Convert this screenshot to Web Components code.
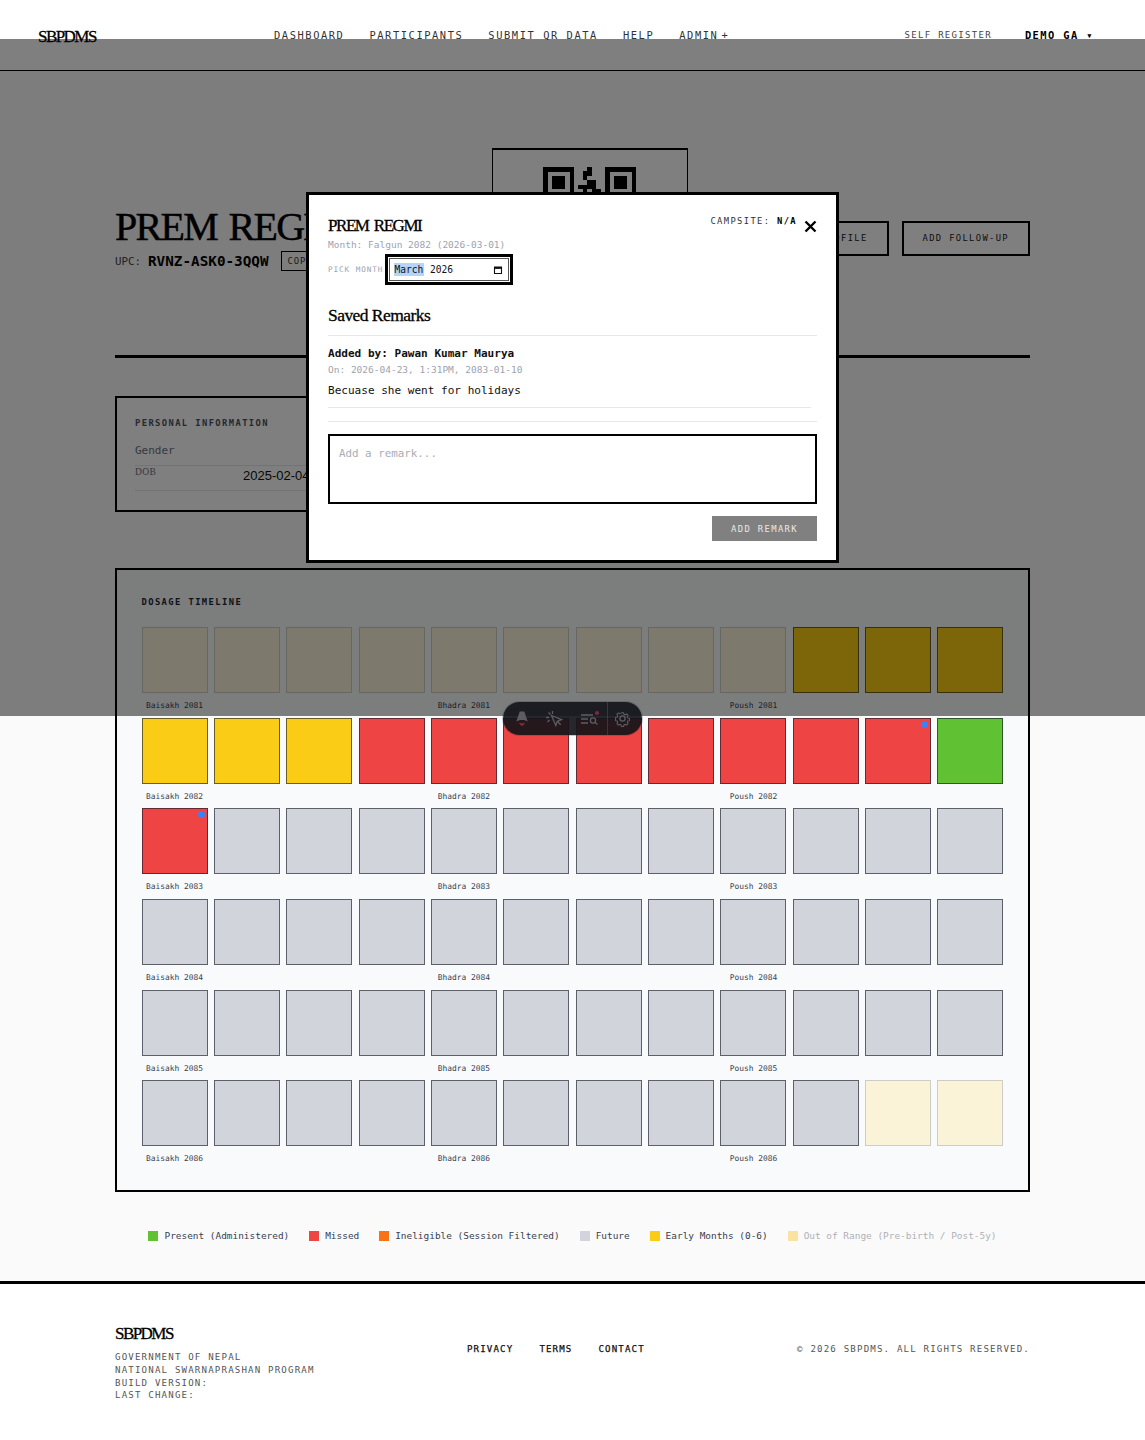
<!DOCTYPE html>
<html lang="en"><head><meta charset="utf-8"><title>SBPDMS</title>
<style>
html,body{margin:0;padding:0}
body{background:#fafafa;font-family:"DejaVu Sans Mono","Liberation Mono",monospace;color:#000;position:relative;min-height:1440px;overflow-x:hidden}
</style></head><body>
<app-header></app-header>
<app-main></app-main>
<app-footer></app-footer>
<remark-modal></remark-modal>
<dev-toolbar></dev-toolbar>
<script>
const MONO='"DejaVu Sans Mono","Liberation Mono",monospace';
const SERIF='"Liberation Serif",serif';
function def(name,html,after){
  customElements.define(name,class extends HTMLElement{
    constructor(){super();this.attachShadow({mode:'open'}).innerHTML=typeof html==='function'?html(this):html;}
    connectedCallback(){if(after)after(this.shadowRoot,this);}
  });
}
def('app-logo',`<style>:host{display:inline-block;font:400 17px/1.2 ${SERIF};letter-spacing:-1.55px;-webkit-text-stroke:.3px #000;color:#000}</style>SBPDMS`);
def('app-header',`<style>
:host{display:block;height:70px;background:#fff;border-bottom:1px solid #000;box-sizing:content-box}
.b{display:flex;align-items:center;height:22px;padding:25px 51px 0 38px;position:relative}
app-logo{margin-top:2px}
nav{position:absolute;left:274px;top:24px;height:22px;display:flex;gap:25px;align-items:center;font:400 10.4px/1 ${MONO};letter-spacing:1.57px;color:#333}
nav em{font-style:normal;margin-left:3px}
.r{margin-left:auto;display:flex;gap:33px;align-items:center;margin-top:-2px}
.s{font-size:9px;letter-spacing:1.3px;color:#444}
.d{font-size:10.4px;font-weight:700;letter-spacing:1.42px}
</style><div class="b"><app-logo></app-logo>
<nav><span>DASHBOARD</span><span>PARTICIPANTS</span><span>SUBMIT QR DATA</span><span>HELP</span><span>ADMIN<em>+</em></span></nav>
<div class="r"><span class="s">SELF REGISTER</span><span class="d">DEMO GA ▾</span></div></div>`);
const QR=["1111111000100011111111","1000001001100010000010","1011101001000010111010","1011101000110010111010","1011101011110010111010","1000001001011010000010","1111111010101011111110","0000000011010000000000","1011011101101101101110","0101100110010011010010","1110111001101100110110","0011000111010110001010","1101101010111001101100","0000000011001010110010","1111111001110110101110","1000001010011001010100","1011101011100111011010","1011101001011000101100","1011101010110111010110","1000001011001010011010","1111111001110101101100"];
def('qr-code',()=>{let r='';QR.forEach((row,y)=>[...row.slice(0,21)].forEach((c,x)=>{if(c==='1')r+=`<rect x="${x}" y="${y}" width="1.02" height="1.02"/>`}));
return `<style>:host{display:block;width:93px;height:93px}svg{display:block}</style><svg width="93" height="93" viewBox="0 0 21 21" shape-rendering="crispEdges" fill="#000">${r}</svg>`});
def('app-hero',`<style>
:host{display:flex;justify-content:space-between;align-items:center;padding:0 0 23px;border-bottom:3px solid #000;height:184px}
.l{width:298px;margin-top:-4px}
h1{margin:0;font:400 40px/1.1 ${SERIF};letter-spacing:-1.7px;word-spacing:3px;-webkit-text-stroke:.45px #000;color:#000;white-space:nowrap}
.u{display:flex;align-items:center;margin-top:2px;font-size:10.8px;color:#444;white-space:nowrap}
.u b{font-size:14.3px;color:#000;margin:0 12px 0 7px}
.c{border:1px solid #000;font-size:8.8px;letter-spacing:1px;padding:4px 6px;color:#333}
.q{box-sizing:border-box;width:196px;height:184px;border:solid #000;border-width:2px 1px 1px;padding-top:17px;display:flex;justify-content:center;background:#fff}
.a{display:flex;gap:13px;margin-top:-4px}
.btn{border:2px solid #000;height:35px;box-sizing:border-box;display:flex;align-items:center;justify-content:center;font-size:8.8px;letter-spacing:1.35px;padding:0 19px;background:#fff;color:#222}
</style><div class="l"><h1>PREM REGMI</h1><div class="u">UPC: <b>RVNZ-ASK0-3QQW</b><span class="c">COPY</span></div></div>
<div class="q"><qr-code></qr-code></div>
<div class="a"><span class="btn">EDIT PROFILE</span><span class="btn">ADD FOLLOW-UP</span></div>`);
def('info-card',`<style>
:host{display:block;box-sizing:border-box;width:450px;height:116px;border:2px solid #000;padding:18px 18px;background:#fff}
h2{margin:0 0 13px;font:700 8.8px/14px ${MONO};letter-spacing:1.4px;color:#4b5563}
.g{font-size:11px;line-height:16px;color:#6b7280;padding-bottom:6px;border-bottom:1px solid #e5e7eb;display:flex;justify-content:space-between}
.d{display:grid;grid-template-columns:108px 1fr;height:25px;border-bottom:1px solid #e5e7eb;box-sizing:border-box}
.d span:first-child{font:400 9.5px/13px ${SERIF};letter-spacing:.4px;color:#6b7280}
.d span:last-child{font:13px/20px "Liberation Sans",sans-serif;color:#111;margin-top:0}
</style><h2>PERSONAL INFORMATION</h2><div class="g"><span>Gender</span><span>Female</span></div><div class="d"><span>DOB</span><span>2025-02-04</span></div>`);
const R=[];const mk=(a)=>R.push(a);
mk([...Array(9).fill('o'),'e','e','e']);
mk(['e','e','e',...Array(7).fill('m'),'m*','p']);
mk(['m*',...Array(11).fill('f')]);
mk(Array(12).fill('f'));mk(Array(12).fill('f'));
mk([...Array(10).fill('f'),'o','o']);
const YRS=[2081,2082,2083,2084,2085,2086];
def('dose-cell',`<style>
:host{display:block;box-sizing:border-box;aspect-ratio:1;border:1px solid rgba(17,24,39,.62);position:relative;background:var(--bg)}
:host([s=o]){opacity:.3}
i{display:none;position:absolute;top:2px;right:2px;width:7px;height:7px;border-radius:50%;background:#3b82f6}
:host([dot]) i{display:block}
</style><i></i>`);
def('dosage-timeline',()=>{
 const col={o:'#fde68a',e:'#facc15',m:'#ef4444',p:'#60c232',f:'#d1d5db'};
 let h='';R.forEach((row,i)=>{row.forEach((c,j)=>{
   const s=c[0],dot=c[1]==='*';
   const lab=j===0?'Baisakh':j===4?'Bhadra':j===8?'Poush':'';
   h+=`<div class="c"><dose-cell s="${s}" ${dot?'dot':''} style="--bg:${col[s]}"></dose-cell><span>${lab?lab+' '+YRS[i]:''}</span></div>`;
 })});
 return `<style>
:host{display:block;border:2px solid #000;background:#f9fafb;padding:25px 24.5px 21px;box-sizing:border-box;height:624px}
h2{margin:0 0 18px;font:700 8.8px/14px ${MONO};letter-spacing:1.41px;color:#1f2937}
.g{display:grid;grid-template-columns:repeat(12,1fr);column-gap:6.3px}
.c{height:90.65px;text-align:center;white-space:nowrap}
.c span{display:block;font-size:7.9px;line-height:10px;color:#374151;margin-top:8px}
</style><h2>DOSAGE TIMELINE</h2><div class="g">${h}</div>`;
});
def('dose-legend',`<style>
:host{display:flex;justify-content:center;gap:19.95px;font-size:9.44px;line-height:12px;color:#374151;white-space:nowrap}
span{display:flex;align-items:center;gap:6px}
i{width:10px;height:10px;display:block;background:var(--c)}
.o{opacity:.4}
</style><span><i style="--c:#60c232"></i>Present (Administered)</span><span><i style="--c:#ef4444"></i>Missed</span><span><i style="--c:#f97316"></i>Ineligible (Session Filtered)</span><span><i style="--c:#d1d5db"></i>Future</span><span><i style="--c:#facc15"></i>Early Months (0-6)</span><span class="o"><i style="--c:#fbbf24"></i>Out of Range (Pre-birth / Post-5y)</span>`);
def('app-main',`<style>
:host{display:block;padding:77px 115px 0;height:1210px;box-sizing:border-box}
info-card{margin-top:38px}
dosage-timeline{margin-top:56px}
dose-legend{margin-top:38px}
</style><app-hero></app-hero><info-card></info-card><dosage-timeline></dosage-timeline><dose-legend></dose-legend>`);
def('app-footer',`<style>
:host{display:block;background:#fff;border-top:3px solid #000;height:159px;box-sizing:border-box;padding:40px 115px 0}
.w{display:grid;grid-template-columns:352px 1fr auto}
.t{font-size:9.1px;letter-spacing:1.18px;line-height:12.6px;color:#555;margin-top:7px}
.n{display:flex;gap:26px;font-size:9.1px;letter-spacing:1.15px;margin-top:19px;line-height:12px}
.n span{font-weight:400;color:#111;-webkit-text-stroke:.25px #111}
.c{font-size:9.1px;letter-spacing:1.18px;color:#555;margin-top:19px;line-height:12px}
</style><div class="w"><div><app-logo></app-logo><div class="t">GOVERNMENT OF NEPAL<br>NATIONAL SWARNAPRASHAN PROGRAM<br>BUILD VERSION:<br>LAST CHANGE:</div></div>
<div class="n"><span>PRIVACY</span><span>TERMS</span><span>CONTACT</span></div><div class="c">© 2026 SBPDMS. ALL RIGHTS RESERVED.</div></div>`);
def('month-field',`<style>
:host{display:flex;align-items:center;box-sizing:border-box;width:120px;height:23px;border:1px solid #555;padding:0 5px 0 4px;font:9.6px/13px ${MONO};color:#111;background:#fff;outline:3px solid #000;outline-offset:1px}
.sel{background:#b5d4f7;padding:0 .5px;margin-right:6px}
svg{margin-left:auto;display:block}
</style><span class="sel">March</span><span>2026</span><svg width="10" height="10" viewBox="0 0 10 10"><path d="M1.5 2.5h7v6h-7z" fill="none" stroke="#111" stroke-width="1.1"/><path d="M1 1.5h8v2.4H1z" fill="#111"/></svg>`);
def('remark-modal',`<style>
:host{position:absolute;left:0;top:39px;width:100%;height:677px;background:rgba(0,0,0,.5);display:flex;align-items:center;justify-content:center;z-index:10}
.m{box-sizing:border-box;width:533px;height:371px;border:3px solid #000;background:#fff;padding:19px}
.top{display:flex;justify-content:space-between;align-items:flex-start}
h3{margin:2px 0 0;font:400 17px/20px ${SERIF};letter-spacing:-1.45px;word-spacing:2.5px;-webkit-text-stroke:.3px #000}
.cs{display:flex;gap:7px;font-size:8.8px;letter-spacing:1.36px;color:#333;line-height:12px;margin-top:1px}
.cs b{color:#000}
.x{display:block;margin-top:5px}
.mo{font-size:9.5px;line-height:13px;color:#9ca3af;margin-top:2px}
.pick{display:flex;align-items:center;margin-top:3px;height:31px}
label{font-size:7.7px;letter-spacing:.9px;color:#9ca3af;width:61px;flex:none;white-space:nowrap}
h4{margin:19px 0 0;font:400 17.5px/22px ${SERIF};letter-spacing:-.55px;-webkit-text-stroke:.3px #000}
.hr{height:1px;background:#e5e7eb}
.s1{margin-top:9px}
.rm{margin-right:6px;padding:11px 0 9px;border-bottom:1px solid #e5e7eb}
.by{font-size:11.05px;font-weight:700;line-height:14px;color:#111}
.on{font-size:9.5px;line-height:13px;color:#9ca3af;margin-top:2px}
.tx{font-size:11.05px;line-height:14px;color:#111;margin-top:8px}
.s2{margin-top:13px}
.ta{box-sizing:border-box;display:block;width:100%;height:70px;border:2px solid #000;margin-top:12px;padding:11px 9px 0;font:10.85px/14px ${MONO};resize:none;border-radius:0;outline:none;background:#fff}
.ta::placeholder{color:#a8adb8;opacity:1}
.f{display:flex;justify-content:flex-end;margin-top:12px}
.ad{width:105px;height:25px;display:flex;align-items:center;justify-content:center;background:#808080;color:#e8e8e8;font-size:8.9px;letter-spacing:1.35px}
</style><div class="m">
<div class="top"><div><h3>PREM REGMI</h3></div><div class="cs"><span>CAMPSITE: <b>N/A</b></span><svg class="x" width="13" height="13" viewBox="0 0 13 13"><path d="M1.5 1.5L11.5 11.5M11.5 1.5L1.5 11.5" stroke="#000" stroke-width="2.4"/></svg></div></div>
<div class="mo">Month: Falgun 2082 (2026-03-01)</div>
<div class="pick"><label>PICK MONTH</label><month-field></month-field></div>
<h4>Saved Remarks</h4><div class="hr s1"></div>
<div class="rm"><div class="by">Added by: Pawan Kumar Maurya</div><div class="on">On: 2026-04-23, 1:31PM, 2083-01-10</div><div class="tx">Becuase she went for holidays</div></div>
<div class="hr s2"></div>
<textarea class="ta" placeholder="Add a remark..."></textarea>
<div class="f"><span class="ad">ADD REMARK</span></div>
</div>`);
def('dev-toolbar',`<style>
:host{position:absolute;left:503px;top:702px;width:139px;height:33px;border-radius:17px;background:rgba(19,21,26,.92);z-index:20;display:flex;align-items:center;box-sizing:border-box;box-shadow:0 0 0 1px rgba(50,50,60,.25)}
svg{display:block;position:absolute;top:8px}
.dv{position:absolute;left:104px;top:0;width:1px;height:33px;background:rgba(120,120,130,.3)}
.ic{fill:none;stroke:#5c5d63;stroke-width:1.3}
</style>
<svg style="left:11px" width="16" height="17" viewBox="0 0 16 17"><path d="M5.7 1.5h4.6l3.4 10-3.6-1.4H6L2.3 11.5z" fill="#5c5d63"/><path d="M5 12.4c1.6 1 4.4 1 6 0-.5 1.6-1.6 3-3 3.7-1.4-.7-2.5-2.1-3-3.7z" fill="#7b2a3e"/></svg>
<svg style="left:42px" width="18" height="17" viewBox="0 0 18 17" class="ic"><path d="M6.5 5.5l10 4.2-4.2 1.6-1.5 4.2z"/><path d="M12.3 11.3l3.4 3.4M3.5 2.5l2 2M1 7.5h3M7.5 1v3M2.5 12l2-2"/></svg>
<svg style="left:77px" width="20" height="17" viewBox="0 0 20 17" class="ic"><path d="M1 5h12M1 9h7M1 13h7"/><circle cx="13" cy="10.5" r="2.6"/><path d="M15 12.5l2.5 2"/><circle cx="17" cy="3" r="2" fill="#7b2a3e" stroke="none"/></svg>
<svg style="left:111px" width="17" height="17" viewBox="0 0 17 17" class="ic"><circle cx="8.5" cy="8.5" r="2.6"/><path d="M7.2 1.2h2.6l.5 2 1.6.7 1.8-1 1.8 1.8-1 1.8.7 1.6 2 .5v2.6l-2 .5-.7 1.6 1 1.8-1.8 1.8-1.8-1-1.6.7-.5 2H7.2l-.5-2-1.6-.7-1.8 1-1.8-1.8 1-1.8-.7-1.6-2-.5V7.2l2-.5.7-1.6-1-1.8 1.8-1.8 1.8 1 1.6-.7z" transform="translate(1.7 1.7) scale(.8)"/></svg>
<i class="dv"></i>`);
</script>
</body></html>
